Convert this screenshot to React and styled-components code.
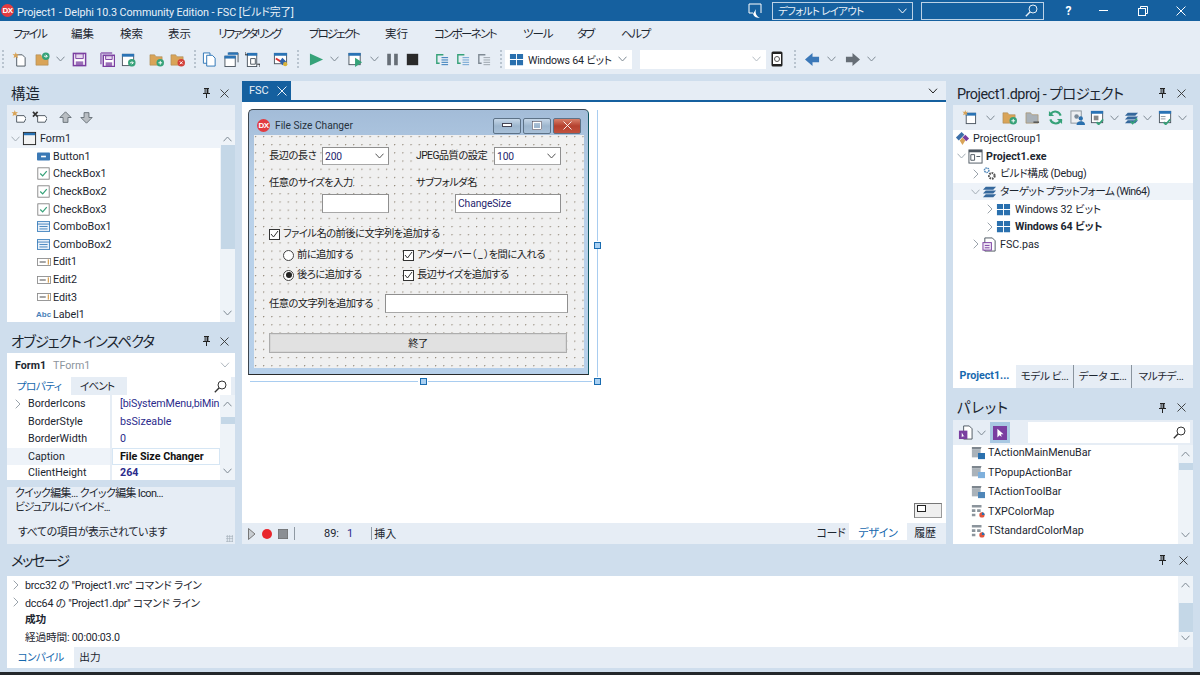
import React from "react";
import styled, { createGlobalStyle } from "styled-components";

const BAND = "#cfdeed";
const PANE = "#e6edf5";
const BLUE = "#15609f";
const LINK = "#1668ae";
const FONT = `Roboto, "Noto Sans CJK JP", sans-serif`;

const GlobalStyle = createGlobalStyle`
  html, body { margin: 0; padding: 0; background: ${BAND}; }
  body {
    font-family: ${FONT};
    font-size: 10.7px;
    color: #1c2630;
    font-feature-settings: "palt";
  }
  * { box-sizing: border-box; }
`;

const Screen = styled.div`
  width: 1200px;
  height: 675px;
  overflow: hidden;
  display: flex;
  flex-direction: column;
  background: ${BAND};
`;

/* ---------- top chrome ---------- */
const TitleBar = styled.header`
  height: 21px;
  flex: none;
  display: flex;
  align-items: center;
  background: ${BLUE};
  color: #e9f1f8;
  font-size: 10.8px;
  padding-left: 1px;
`;
const Logo = styled.span`
  width: ${(p) => p.$size || 13}px;
  height: ${(p) => p.$size || 13}px;
  border-radius: 50%;
  background: #e23b40;
  color: #fff;
  font: bold 8px/1 "Liberation Sans", sans-serif;
  letter-spacing: -0.5px;
  display: flex;
  align-items: center;
  justify-content: center;
  flex: none;
`;
const AppTitle = styled.span`
  margin-left: 3px;
  white-space: nowrap;
  width: 731px;
  letter-spacing: -0.1px;
`;
const DarkCombo = styled.div`
  height: 18px;
  width: ${(p) => p.$w}px;
  margin-left: ${(p) => p.$ml}px;
  border: 1px solid #bcd2e6;
  display: flex;
  align-items: center;
  justify-content: space-between;
  padding: 0 5px;
  font-size: 10.5px;
  letter-spacing: -0.7px;
  color: #e9f1f8;
`;
const WinBtn = styled.span`
  width: ${(p) => p.$w}px;
  margin-left: ${(p) => p.$ml || 0}px;
  display: flex;
  justify-content: center;
  font-size: 12px;
  font-weight: 700;
  color: #fff;
  flex: none;
`;
const MenuBar = styled.nav`
  height: 23px;
  flex: none;
  display: flex;
  align-items: center;
  gap: 26px;
  padding-left: 13px;
  background: ${PANE};
  font-size: 11.5px;
`;
const MenuItem = styled.span`
  width: ${(p) => p.$w}px;
  letter-spacing: ${(p) => p.$track}px;
  white-space: nowrap;
  flex: none;
`;
const ToolBar = styled.div`
  height: 30px;
  flex: none;
  display: flex;
  align-items: center;
  background: ${PANE};
`;
const Slot = styled.span`
  margin-left: ${(p) => p.$ml || 0}px;
  display: flex;
  flex: none;
`;
const Grip = styled.span`
  margin-left: ${(p) => p.$ml || 0}px;
  width: 2px;
  height: 19px;
  flex: none;
  background: repeating-linear-gradient(#b9c4cf 0 2px, transparent 2px 4px);
`;
const ToolCombo = styled.div`
  width: ${(p) => p.$w}px;
  margin-left: ${(p) => p.$ml}px;
  height: 19px;
  flex: none;
  display: flex;
  align-items: center;
  gap: 4px;
  padding: 0 4px;
  background: #fff;
  font-size: 10.6px;
  letter-spacing: -0.2px;
  white-space: nowrap;
  & > svg:last-child { margin-left: auto; margin-right: 1px; }
`;

/* ---------- docking layout ---------- */
const Workspace = styled.main`
  flex: 1;
  min-height: 0;
  display: flex;
  flex-direction: column;
  padding: 7px 7px 4px;
`;
const TopRow = styled.div`
  height: 463px;
  flex: none;
  display: grid;
  grid-template-columns: 228px 704px 240px;
  gap: 7px;
`;
const Stack = styled.div`
  display: flex;
  flex-direction: column;
  min-height: 0;
`;
const PanelHead = styled.div`
  height: ${(p) => p.$h || 24}px;
  flex: none;
  display: flex;
  align-items: center;
  padding: 0 ${(p) => p.$pr || 6}px 0 ${(p) => p.$pl || 4}px;
  font-size: 14.4px;
  color: #1c2630;
  margin-top: ${(p) => p.$mt || 0}px;
`;
const HeadTitle = styled.span`
  flex: 1;
  white-space: nowrap;
  letter-spacing: ${(p) => p.$track || 0}px;
  margin-top: -2px;
`;
const HeadIcons = styled.span`
  display: flex;
  align-items: center;
  gap: ${(p) => p.$gap || 10}px;
  padding-right: ${(p) => p.$pr || 0}px;
`;
const PaneBar = styled.div`
  height: ${(p) => p.$h || 25}px;
  flex: none;
  display: flex;
  align-items: center;
  background: ${PANE};
`;
const TreeBox = styled.div`
  height: ${(p) => p.$h}px;
  flex: none;
  display: flex;
  background: #fff;
  overflow: hidden;
`;
const TreeRows = styled.div`
  flex: 1;
  min-width: 0;
  margin-top: ${(p) => p.$mt || 0}px;
`;
const TreeRow = styled.div`
  height: ${(p) => p.$h || 17.6}px;
  display: flex;
  align-items: center;
  padding-left: ${(p) => p.$indent}px;
  background: ${(p) => (p.$active ? "#eef3f9" : "transparent")};
  font-weight: ${(p) => (p.$bold ? 700 : 400)};
  white-space: nowrap;
`;
const TreeText = styled.span`
  letter-spacing: ${(p) => p.$track || 0}px;
  margin-bottom: 2px;
`;
const ChevronCell = styled.span`
  width: ${(p) => p.$w || 13}px;
  flex: none;
  display: flex;
  justify-content: center;
`;
const IconCell = styled.span`
  width: ${(p) => p.$w || 15}px;
  margin-right: ${(p) => p.$mr || 3}px;
  flex: none;
  display: flex;
  justify-content: center;
`;
const ScrollTrack = styled.div`
  width: 15px;
  flex: none;
  background: #eef3f8;
  display: flex;
  flex-direction: column;
  align-items: center;
  justify-content: space-between;
  padding: 6px 0;
  position: relative;
`;
const ScrollThumb = styled.span`
  position: absolute;
  left: 1px;
  right: 0;
  top: ${(p) => p.$top}px;
  height: ${(p) => p.$h}px;
  background: #c4d7e7;
`;
const TabStrip = styled.div`
  height: ${(p) => p.$h || 18}px;
  flex: none;
  display: flex;
  align-items: stretch;
  background: ${PANE};
`;
const Tab = styled.span`
  width: ${(p) => p.$w}px;
  margin-left: ${(p) => p.$ml || 0}px;
  padding-bottom: 2px;
  display: flex;
  align-items: center;
  justify-content: center;
  white-space: nowrap;
  flex: none;
  letter-spacing: ${(p) => p.$track || 0}px;
  background: ${(p) => (p.$on ? "#fff" : "transparent")};
  color: ${(p) => (p.$on ? LINK : "#1c2630")};
  font-weight: ${(p) => (p.$strong ? 700 : 400)};
  border-right: ${(p) => (p.$rule ? "1px solid #8a949e" : "none")};
`;

/* ---------- inspector ---------- */
const SelectorRow = styled.div`
  height: 24px;
  flex: none;
  background: #fff;
  display: flex;
  align-items: center;
  padding: 0 5px 0 8px;
  gap: 7px;
  font-weight: 700;
  & > svg { margin-left: auto; }
`;
const Muted = styled.span`
  font-weight: 400;
  color: #8b949c;
`;
const SearchBox = styled.span`
  width: ${(p) => p.$w}px;
  margin-left: ${(p) => p.$ml}px;
  height: ${(p) => p.$h || "auto"};
  background: #fff;
  display: flex;
  align-items: center;
  justify-content: flex-end;
  padding-right: 4px;
  flex: none;
`;
const PropGrid = styled.div`
  height: 85px;
  flex: none;
  display: flex;
  background: #fff;
  margin-bottom: 7px;
  overflow: hidden;
`;
const PropRow = styled.div`
  height: 17.6px;
  display: grid;
  grid-template-columns: 21px 82px 2px 1fr;
  align-items: center;
  background: ${(p) => (p.$active ? "#eef3f9" : "transparent")};
  white-space: nowrap;
  &:last-child { height: 14.6px; }
`;
const PropDivider = styled.span`
  height: 100%;
  background: ${PANE};
`;
const PropValue = styled.span`
  height: 100%;
  display: flex;
  align-items: center;
  padding-left: 8px;
  letter-spacing: ${(p) => p.$track || 0}px;
  color: ${(p) => (p.$active ? "#111" : "#2c2c8c")};
  font-weight: ${(p) => (p.$bold ? 700 : 400)};
  background: ${(p) => (p.$active ? "#fff" : "transparent")};
  box-shadow: ${(p) => (p.$active ? "inset 0 0 0 1px #d6e6f4" : "none")};
`;
const QuickPane = styled.div`
  flex: 1;
  background: ${PANE};
  padding: 0 8px;
  font-size: 10.9px;
  line-height: 14px;
  position: relative;
  white-space: nowrap;
`;
const QuickLink = styled.div`
  margin-top: ${(p) => p.$mt}px;
  padding-left: ${(p) => p.$pl || 0}px;
  letter-spacing: ${(p) => p.$track}px;
`;
const ResizeGrip = styled.span`
  position: absolute;
  right: 2px;
  bottom: 2px;
  width: 7px;
  height: 7px;
  background: radial-gradient(circle, #a7b2bc 0.8px, transparent 1px) 0 0 / 2.5px 2.5px;
`;

/* ---------- designer ---------- */
const DocTabs = styled.div`
  height: 21px;
  flex: none;
  display: flex;
  align-items: stretch;
  justify-content: space-between;
  background: ${PANE};
  border-bottom: 2px solid ${BLUE};
`;
const DocTab = styled.span`
  width: 49px;
  background: ${BLUE};
  color: #e9f1f8;
  display: flex;
  align-items: center;
  justify-content: space-between;
  padding: 0 4px 0 7px;
  font-size: 11px;
`;
const Canvas = styled.div`
  height: 421px;
  flex: none;
  background: #fff;
  padding: 7px 6px;
  position: relative;
`;
const Selection = styled.div`
  width: 341px;
  position: relative;
`;
const SelLine = styled.span`
  position: absolute;
  background: #a9cdf0;
  ${(p) => (p.$v ? "width: 1px;" : "height: 1px;")}
  ${(p) => p.$at}
`;
const Handle = styled.span`
  position: absolute;
  width: 7px;
  height: 7px;
  background: #a9d0f2;
  border: 1px solid #1a6cb0;
  ${(p) => p.$at}
`;
const MiniMap = styled.span`
  position: absolute;
  left: 672px;
  top: 401px;
  width: 28px;
  height: 15px;
  background: #efefef;
  border: 1px solid;
  border-color: #777 #9a9a9a #9a9a9a #777;
  &::after {
    content: "";
    position: absolute;
    left: 2px;
    top: 1px;
    width: 7px;
    height: 5px;
    background: #fff;
    border: 1px solid #222;
  }
`;
const FormWindow = styled.div`
  height: 266px;
  border: 1px solid #3c4650;
  border-right-color: #0f5560;
  border-bottom-color: #2a2a2a;
  border-radius: 5px 5px 0 0;
  background: linear-gradient(#a3bcd8, #bad2ea 30%, #b7d0ea);
  padding: 0 4px 6px 5px;
  display: flex;
  flex-direction: column;
`;
const FormTitle = styled.div`
  height: 25px;
  flex: none;
  display: flex;
  align-items: center;
  padding: 6px 3px 0 3px;
  font-size: 10.2px;
  color: #26323c;
`;
const FormCaption = styled.span`
  flex: 1;
  margin-left: 5px;
`;
const CapBtn = styled.span`
  width: 28px;
  height: 16px;
  margin-left: 2px;
  border: 1px solid #5d7287;
  border-radius: 2px;
  background: ${(p) =>
    p.$close
      ? "linear-gradient(#d8806a, #b5412f 50%, #c1513d)"
      : "linear-gradient(#c6d7e8, #9db6ce 50%, #a8c0d8)"};
  display: flex;
  align-items: center;
  justify-content: center;
`;
const FormBody = styled.div`
  flex: 1;
  background-color: #f0f0f0;
  background-image: radial-gradient(circle at 1.5px 1.5px, #8e8474 0.55px, transparent 0.9px);
  background-size: 8.2px 8.2px;
  font-size: 10.3px;
  letter-spacing: -0.55px;
  color: #1c1c1c;
  overflow: hidden;
`;
const FormRow = styled.div`
  height: ${(p) => p.$h}px;
  margin-top: ${(p) => p.$mt}px;
  display: flex;
  align-items: center;
`;
const FormLabel = styled.span`
  margin-left: ${(p) => p.$ml || 0}px;
  width: ${(p) => p.$w}px;
  background: #f0f0f0;
  line-height: 14px;
  white-space: nowrap;
  flex: none;
`;
const Edit = styled.div`
  width: ${(p) => p.$w}px;
  height: ${(p) => p.$h || 19}px;
  margin-left: ${(p) => p.$ml || 0}px;
  flex: none;
  background: #fff;
  border: 1px solid #8f8f8f;
  border-bottom-color: #a8a8a8;
  display: flex;
  align-items: center;
  justify-content: space-between;
  padding: 0 4px 0 2px;
  color: #26266e;
  letter-spacing: -0.1px;
`;
const CheckField = styled.span`
  margin-left: ${(p) => p.$ml || 0}px;
  width: ${(p) => p.$w}px;
  height: 14px;
  flex: none;
  display: flex;
  align-items: center;
  gap: 3px;
  background: #f0f0f0;
  white-space: nowrap;
  line-height: 14px;
`;
const CheckMark = styled.span`
  width: 11px;
  height: 11px;
  flex: none;
  background: #fff;
  border: 1px solid #333;
  display: flex;
  align-items: center;
  justify-content: center;
`;
const Radio = styled.span`
  width: 11px;
  height: 11px;
  flex: none;
  border-radius: 50%;
  background: #fff;
  border: 1px solid #444;
  display: flex;
  align-items: center;
  justify-content: center;
  &::after {
    content: "";
    width: 6px;
    height: 6px;
    border-radius: 50%;
    background: ${(p) => (p.$on ? "#222" : "transparent")};
  }
`;
const FormButton = styled.div`
  width: 298px;
  height: 20px;
  margin-left: 15px;
  padding-bottom: 2px;
  background: #e1e1e1;
  border: 1px solid #adadad;
  box-shadow: inset 0 0 0 1px #d6d6d6;
  display: flex;
  align-items: center;
  justify-content: center;
`;
const StatusBar = styled.div`
  height: 21px;
  flex: none;
  display: flex;
  align-items: center;
  background: ${PANE};
  font-size: 11px;
  padding-right: 3px;
`;
const StatusRule = styled.span`
  width: 1px;
  height: 13px;
  margin-left: ${(p) => p.$ml}px;
  background: #8f99a3;
  flex: none;
`;
const StatusText = styled.span`
  margin-left: ${(p) => p.$ml}px;
  margin-bottom: ${(p) => p.$lift || 0}px;
  flex: none;
  color: ${(p) => p.$color || "inherit"};
`;
const ViewTab = styled.span`
  height: 17px;
  align-self: flex-start;
  margin-left: ${(p) => p.$ml || 0};
  width: ${(p) => p.$w}px;
  flex: none;
  display: flex;
  align-items: center;
  justify-content: center;
  letter-spacing: -0.3px;
  background: ${(p) => (p.$on ? "#fff" : "transparent")};
  color: ${(p) => (p.$on ? LINK : "inherit")};
`;

/* ---------- messages ---------- */
const MessagesBox = styled.div`
  height: 71px;
  flex: none;
  display: flex;
  background: #fff;
`;
const MsgRow = styled.div`
  height: 17.6px;
  display: flex;
  align-items: center;
  padding-left: 2px;
  font-weight: ${(p) => (p.$bold ? 700 : 400)};
  white-space: nowrap;
`;
const MsgText = styled.span`
  margin-left: 3px;
  margin-bottom: ${(p) => (p.$pl ? 2 : 0)}px;
  padding-left: ${(p) => p.$pl || 0}px;
  letter-spacing: -0.2px;
`;
const ScreenEdge = styled.div`
  height: 3px;
  flex: none;
  background: #23272b;
`;

/* ---------- icons ---------- */
const Ico = styled.svg.attrs((p) => ({
  width: p.$s || 15,
  height: p.$s || 15,
  viewBox: "0 0 16 16",
  fill: "none",
}))`
  display: block;
  flex: none;
`;
const G = "#36a279";
const P = "#7a3ea0";
const B = "#2a73b5";
const O = "#d9a458";
const D = "#4c5660";

const ChevD = ({ c = "#7f8a94", w = 9 }) => (
  <svg width={w} height="6" viewBox="0 0 9 6" fill="none" style={{ display: "block", flex: "none" }}>
    <path d="M.5.7 4.5 5 8.5.7" stroke={c} />
  </svg>
);
const ChevR = ({ c = "#9aa3ab" }) => (
  <svg width="6" height="10" viewBox="0 0 6 10" fill="none" style={{ display: "block", flex: "none" }}>
    <path d="M.7.7 5 5 .7 9.3" stroke={c} />
  </svg>
);
const ChevU = ({ c = "#7f8a94" }) => (
  <svg width="9" height="6" viewBox="0 0 9 6" fill="none" style={{ display: "block" }}>
    <path d="M.5 5.3 4.5 1l4 4.3" stroke={c} />
  </svg>
);
const Pin = () => (
  <svg width="7" height="10" viewBox="0 0 7 10" style={{ display: "block" }}>
    <path d="M1 0h5v1H5.4v4H7v1H4v4H3V6H0V5h1.6V1H1zM2.6 1v4h1V1z" fill="#222" />
  </svg>
);
const Close = ({ c = "#333", s = 9 }) => (
  <svg width={s} height={s} viewBox="0 0 9 9" fill="none" style={{ display: "block" }}>
    <path d="m.5.5 8 8m0-8-8 8" stroke={c} strokeWidth=".9" />
  </svg>
);
const Lens = ({ c = "#333" }) => (
  <svg width="13" height="13" viewBox="0 0 13 13" fill="none" style={{ display: "block" }}>
    <circle cx="8" cy="5" r="4" stroke={c} />
    <path d="M5 8 .8 12.2" stroke={c} strokeWidth="1.4" />
  </svg>
);
const Badge = ({ c, x = 12, y = 12, r = 3.6, kind }) => (
  <>
    <circle cx={x} cy={y} r={r} fill={c} />
    {kind === "plus" && <path d={`M${x - 2} ${y}h4M${x} ${y - 2}v4`} stroke="#fff" />}
    {kind === "x" && <path d={`m${x - 1.5} ${y - 1.5} 3 3m0-3-3 3`} stroke="#fff" />}
    {kind === "arrow" && <path d={`M${x - 2} ${y}h3.5m-1.5-1.6 1.6 1.6-1.6 1.6`} stroke="#fff" />}
  </>
);
const Check = ({ x = 8, y = 10 }) => (
  <path d={`m${x} ${y + 2} 2.2 2.4L${x + 7} ${y - 1}`} stroke={G} strokeWidth="1.8" />
);
const Folder = ({ c = O }) => (
  <path d="M1 3h5l1.5 2H14v9H1z" fill={c} stroke="#a88a55" strokeWidth=".6" />
);
const Win = ({ x = 1, y = 2, w = 12, h = 12, fill = "#fff" }) => (
  <>
    <rect x={x + 0.5} y={y + 0.5} width={w} height={h} fill={fill} stroke={D} />
    <rect x={x} y={y} width={w + 1} height="3" fill={B} />
  </>
);

const NewFile = () => (
  <Ico>
    <path d="M5 3h6l3 3v9H5z" fill="#fff" stroke={D} />
    <path d="m4 0 .9 2.4L7.4 2 5.6 4l1 2.4L4 5.2 1.6 6.4l.8-2.4L.6 2l2.6.4z" fill={O} />
  </Ico>
);
const OpenFolder = () => (
  <Ico>
    <Folder />
    <Badge c={G} x={11.5} y={4.5} r={4} kind="arrow" />
  </Ico>
);
const Floppy = ({ shadow }) => (
  <Ico>
    {shadow && <path d="M1 1h12M1 1v12" stroke={P} strokeWidth="2" opacity=".6" />}
    <rect x={shadow ? 3.5 : 1.5} y={shadow ? 3.5 : 1.5} width={shadow ? 12 : 13} height={shadow ? 12 : 13} fill="#fff" stroke={P} strokeWidth="1.6" />
    <path d={shadow ? "M6 4h7v4H6z" : "M4 2h8v5H4z"} fill="#e6d8ef" stroke={P} />
    <path d={shadow ? "M6 11h7v4H6z" : "M4 10h8v5H4z"} fill={P} opacity=".75" />
  </Ico>
);
const WinBadge = () => (
  <Ico>
    <Win />
    <Badge c={G} x={11.5} y={11.5} r={4} kind="arrow" />
  </Ico>
);
const FolderBadge = ({ c, kind }) => (
  <Ico>
    <Folder />
    <Badge c={c} x={12} y={11.5} r={4} kind={kind} />
  </Ico>
);
const DocCopy = () => (
  <Ico>
    <path d="M1.5 1h7v11h-7z" fill="#fff" stroke={B} />
    <path d="M5 3.500h6l3 3V15H5z" fill="#fff" stroke={B} />
  </Ico>
);
const WinStack = () => (
  <Ico>
    <path d="M5 1h10v10" stroke={D} />
    <rect x="4" y="0.500" width="11" height="2.500" fill={B} />
    <Win x={0.5} y={4} w={11} h={11} />
  </Ico>
);
const DocSwap = () => (
  <Ico>
    <Win x={2} y={1} w={10} h={14} />
    <path d="M0 0v3h3M16 16v-3h-3" stroke="#222" />
    <path d="M6 7h5v6H6z" stroke={D} />
  </Ico>
);
const ViewForm = () => (
  <Ico>
    <Win x={1} y={1} w={13} h={11} />
    <path d="M3 7l5 3" stroke="#d33" strokeWidth="2" />
    <path d="m10 6 4 4-4 4-3-4z" fill="#2f62a8" />
    <circle cx="13" cy="13" r="2.300" fill="#d8b23a" />
  </Ico>
);
const Play = () => (
  <Ico>
    <path d="M1 1.500 15 8 1 14.500z" fill={G} />
  </Ico>
);
const WinPlay = () => (
  <Ico>
    <Win x={0.5} y={1} w={12} h={12} />
    <path d="M7.500 6v10L15 11z" fill={G} />
  </Ico>
);
const Pause = () => (
  <Ico $s={13}>
    <path d="M1.500 1h4.500v14H1.500zM10 1h4.500v14H10z" fill="#666e76" />
  </Ico>
);
const Stop = () => (
  <Ico $s={13}>
    <rect x="1" y="1" width="14" height="14" fill="#2a2a2a" />
  </Ico>
);
const Step = ({ c = G, lines = B }) => (
  <Ico>
    <path d="M10 3H3v9h3" stroke={c} strokeWidth="1.500" />
    <path d="M8 6h7M8 8.500h7M8 11h7M8 13.500h7" stroke={lines} />
  </Ico>
);
const Device = () => (
  <Ico $s={16}>
    <rect x="2.500" y=".5" width="11" height="15" rx="1.500" fill="#222" />
    <rect x="4" y="3" width="8" height="10" fill="#fff" />
    <circle cx="8" cy="8" r="2.500" stroke="#555" />
  </Ico>
);
const ArrowL = ({ c }) => (
  <Ico>
    <path d="M0 8 8 1v4h7v6H8v4z" fill={c} />
  </Ico>
);
const ArrowR = ({ c }) => (
  <Ico>
    <path d="M16 8 8 1v4H1v6h7v4z" fill={c} />
  </Ico>
);
const Tag = ({ mark }) => (
  <Ico>
    <path d="M6 6h8l2 3-2 4H6z" fill="#fff" stroke={D} />
    {mark === "new" ? (
      <path d="m4 0 .9 2.400L7.400 2 5.600 4l1 2.400L4 5.200 1.600 6.400l.8-2.400L.6 2l2.600.4z" fill={O} />
    ) : (
      <path d="m1 2 5 5m0-5-5 5" stroke="#333" strokeWidth="1.800" />
    )}
  </Ico>
);
const Up = () => (
  <Ico $s={13}>
    <path d="M8 1 15 8h-4v6H5V8H1z" fill="#b9bec3" stroke="#59626a" />
  </Ico>
);
const Down = () => (
  <Ico $s={13}>
    <path d="M8 15 1 8h4V2h6v6h4z" fill="#b9bec3" stroke="#59626a" />
  </Ico>
);
const FormIco = () => (
  <Ico>
    <rect x="1.500" y="1.500" width="13" height="13" fill="#f3f3f3" stroke="#222" />
    <rect x="2" y="2" width="12" height="2.500" fill={B} />
  </Ico>
);
const ButtonIco = () => (
  <Ico $s={13}>
    <rect y="3" width="16" height="10" rx="1" fill="#3b79b5" />
    <path d="M5 8h6" stroke="#fff" strokeWidth="2" />
  </Ico>
);
const CheckIco = () => (
  <Ico $s={13}>
    <rect x="1" y="1" width="14" height="14" fill="#fff" stroke="#777" />
    <path d="m4 8 3 3 5-6" stroke={G} strokeWidth="1.500" />
  </Ico>
);
const ComboIco = () => (
  <Ico $s={13}>
    <rect x=".5" y="2" width="15" height="12" fill="#eaf2fa" stroke={B} />
    <path d="M.5 5h15M3 8h10M3 11h10" stroke={B} />
  </Ico>
);
const EditIco = () => (
  <Ico $s={14}>
    <rect x=".5" y="4" width="15" height="8" fill="#fff" stroke="#8b8b8b" />
    <path d="M3 8h7" stroke="#999" strokeWidth="2" />
    <path d="M13 5v6" stroke={O} strokeWidth="1.500" />
  </Ico>
);
const AbcIco = styled.span`
  font: bold 8px/1 "Liberation Sans", sans-serif;
  color: #4a80b8;
  width: 15px;
  display: block;
`;
const DiamondGroup = () => (
  <Ico>
    <path d="M7 1 1 7l3 3 6-6z" fill="#3c6fa8" />
    <path d="m11 4 4 4-3 3-4-4z" fill={P} />
    <path d="m5 10 3-3 3 3-3 5z" fill={O} />
  </Ico>
);
const ExeIco = () => (
  <Ico>
    <rect x="1" y="1" width="14" height="14" fill="#fff" stroke={D} />
    <rect x="1" y="1" width="14" height="2.500" fill={D} />
    <path d="M3 6h4v6H3zM9 8h4" stroke={D} />
  </Ico>
);
const Gears = () => (
  <Ico>
    <circle cx="5" cy="4.500" r="2.400" stroke="#4f86b8" strokeWidth="1.600" strokeDasharray="1.500 .7" />
    <circle cx="10.500" cy="10.500" r="3" stroke="#555" strokeWidth="2.200" strokeDasharray="1.800 .9" />
  </Ico>
);
const Layers = ({ check }) => (
  <Ico>
    <path d="M4 3h11l-3 3H1zM4 7h11l-3 3H1zM4 11h11l-3 3H1z" fill="#35689c" />
    {check && <Check x={7} y={10} />}
  </Ico>
);
const WinsLogo = ({ s = 15 }) => (
  <Ico $s={s}>
    <path d="M1 2h6.500v5.500H1zM8.500 2H15v5.500H8.500zM1 8.500h6.500V14H1zM8.500 8.500H15V14H8.500z" fill="#2a70ae" />
  </Ico>
);
const PasIco = () => (
  <Ico>
    <path d="M3 1h8l3 3v11H3z" fill="#fff" stroke={D} />
    <rect x="1" y="6" width="9" height="8" fill="#efe7f4" stroke={P} />
    <path d="M3 9h5M3 11.500h5" stroke={P} />
  </Ico>
);
const AddWin = () => (
  <Ico>
    <Win x={4} y={3} w={10} h={11} />
    <path d="m3.500 0 .8 2 2.200-.4L5 3.300l.9 2.200-2.400-1-2.300 1L2 3.300.4 1.600l2.300.4z" fill={O} />
  </Ico>
);
const FolderGreyMinus = () => (
  <Ico>
    <Folder c="#a9b1b8" />
    <path d="M9 13h6" stroke="#555" strokeWidth="1.600" />
  </Ico>
);
const Refresh = () => (
  <Ico>
    <path d="M13.500 6A6 6 0 0 0 3 4L1.500 6M2.500 10A6 6 0 0 0 13 12l1.500-2" stroke={G} strokeWidth="2.200" />
    <path d="M1 1v5.500h5.500M15 15V9.500H9.500" fill={G} />
  </Ico>
);
const People = () => (
  <Ico>
    <rect x="1" y="1" width="11" height="13" fill="#eceff2" stroke="#8a939b" />
    <circle cx="7" cy="7" r="2.400" fill="#7a8a99" />
    <circle cx="11.500" cy="9" r="2.300" fill="#2a70ae" />
    <path d="M7 16a4.500 4 0 0 1 9 0z" fill="#2a70ae" />
  </Ico>
);
const WinCheck = () => (
  <Ico>
    <Win x={1} y={1} w={12} h={12} />
    <rect x="4" y="6" width="5" height="5" fill="#888" />
    <Check x={7} y={11} />
  </Ico>
);
const DocCheck = () => (
  <Ico>
    <Win x={1} y={1} w={12} h={12} />
    <path d="M3 7h5M3 9.500h5" stroke="#8a939b" />
    <Check x={6} y={11} />
  </Ico>
);
const PalDoc = () => (
  <Ico>
    <path d="M6 1h6l3 3v11H6z" fill="#fff" stroke={D} />
    <rect x="1" y="6" width="9" height="9" fill={P} />
    <path d="M4 8v5l1.500-1.300L7 13z" fill="#fff" />
  </Ico>
);
const CursorSquare = () => (
  <Ico $s={14}>
    <rect width="16" height="16" fill={P} />
    <path d="M5 3v10l2.500-2.400L10 12.500l-.9-3H12z" fill="#fff" />
  </Ico>
);
const ActionIco = ({ tail }) => (
  <Ico $s={14}>
    <path d="m1 1 11 0-1 3H1z" fill="#7d868e" />
    <rect x="1" y="4" width="10" height="9" fill="#aab2b9" />
    <rect x="8" y="8" width="8" height="7" fill={tail} />
  </Ico>
);
const MapIco = () => (
  <Ico $s={14}>
    <path d="M1 1h11v3H1zM1 6h4v3H1zM7 6h4v3H7zM1 11h4v3H1z" fill="#8b949c" />
    <circle cx="12.500" cy="12.500" r="3" fill="#e0553f" />
    <path d="M12.500 9.500a3 3 0 0 1 3 3h-3z" fill="#2a70ae" />
  </Ico>
);

const PanelControls = ({ gap }) => (
  <HeadIcons $gap={gap}>
    <Pin />
    <Close />
  </HeadIcons>
);

const structureItems = [
  [<ButtonIco />, "Button1"],
  [<CheckIco />, "CheckBox1"],
  [<CheckIco />, "CheckBox2"],
  [<CheckIco />, "CheckBox3"],
  [<ComboIco />, "ComboBox1"],
  [<ComboIco />, "ComboBox2"],
  [<EditIco />, "Edit1"],
  [<EditIco />, "Edit2"],
  [<EditIco />, "Edit3"],
  [<AbcIco>Abc</AbcIco>, "Label1"],
];

const properties = [
  { name: "BorderIcons", value: "[biSystemMenu,biMin", open: true, track: -0.15 },
  { name: "BorderStyle", value: "bsSizeable" },
  { name: "BorderWidth", value: "0" },
  { name: "Caption", value: "File Size Changer", active: true, bold: true },
  { name: "ClientHeight", value: "264", bold: true },
];

const palette = [
  [<ActionIco tail="#2a70ae" />, "TActionMainMenuBar"],
  [<ActionIco tail="#7fb0dc" />, "TPopupActionBar"],
  [<ActionIco tail="#4f86b8" />, "TActionToolBar"],
  [<MapIco />, "TXPColorMap"],
  [<MapIco />, "TStandardColorMap"],
];

const StructurePanel = () => (
  <>
    <PanelHead>
      <HeadTitle>構造</HeadTitle>
      <PanelControls />
    </PanelHead>
    <PaneBar>
      <Slot $ml={4}><Tag mark="new" /></Slot>
      <Slot $ml={6}><Tag mark="x" /></Slot>
      <Slot $ml={12}><Up /></Slot>
      <Slot $ml={8}><Down /></Slot>
    </PaneBar>
    <TreeBox $h={192}>
      <TreeRows>
        <TreeRow $indent={2} $active>
          <ChevronCell><ChevD c="#a4adb5" /></ChevronCell>
          <IconCell><FormIco /></IconCell>
          Form1
        </TreeRow>
        {structureItems.map(([icon, label]) => (
          <TreeRow $indent={29} key={label}>
            <IconCell $mr={2}>{icon}</IconCell>
            {label}
          </TreeRow>
        ))}
      </TreeRows>
      <ScrollTrack>
        <ChevU />
        <ScrollThumb $top={15} $h={104} />
        <ChevD />
      </ScrollTrack>
    </TreeBox>
  </>
);

const InspectorPanel = () => (
  <>
    <PanelHead $mt={7}>
      <HeadTitle $track={-1}>オブジェクト インスペクタ</HeadTitle>
      <PanelControls />
    </PanelHead>
    <SelectorRow>
      Form1 <Muted>TForm1</Muted>
      <ChevD c="#b0b8bf" w={10} />
    </SelectorRow>
    <TabStrip>
      <Tab $w={64} $on $track={-0.6}>プロパティ</Tab>
      <Tab $w={52} $track={-0.9}>イベント</Tab>
      <SearchBox $w={104} $ml={4} $h="18px">
        <Lens />
      </SearchBox>
    </TabStrip>
    <PropGrid>
      <TreeRows>
        {properties.map((p) => (
          <PropRow key={p.name} $active={p.active}>
            <ChevronCell $w={21}>{p.open && <ChevR />}</ChevronCell>
            <span>{p.name}</span>
            <PropDivider />
            <PropValue $active={p.active} $bold={p.bold} $track={p.track}>{p.value}</PropValue>
          </PropRow>
        ))}
      </TreeRows>
      <ScrollTrack>
        <ChevU />
        <ScrollThumb $top={22} $h={7} />
        <ChevD />
      </ScrollTrack>
    </PropGrid>
    <QuickPane>
      <QuickLink $mt={0} $track={-0.6}>クイック編集... クイック編集 Icon...</QuickLink>
      <QuickLink $mt={0} $track={-0.9}>ビジュアルにバインド...</QuickLink>
      <QuickLink $mt={11} $pl={3} $track={-0.4}>すべての項目が表示されています</QuickLink>
      <ResizeGrip />
    </QuickPane>
  </>
);

const Option = ({ ml, w, checked, radio, on, children }) => (
  <CheckField $ml={ml} $w={w}>
    {radio ? (
      <Radio $on={on} />
    ) : (
      <CheckMark>
        <svg width="9" height="8" viewBox="0 0 9 8" fill="none">
          {checked && <path d="m1 4 2.500 3L8 1" stroke="#333" />}
        </svg>
      </CheckMark>
    )}
    <span>{children}</span>
  </CheckField>
);

const DesignedForm = () => (
  <FormWindow>
    <FormTitle>
      <Logo>DX</Logo>
      <FormCaption>File Size Changer</FormCaption>
      <CapBtn>
        <svg width="10" height="5"><rect x=".5" y=".5" width="9" height="3" fill="#fff" stroke="#445" /></svg>
      </CapBtn>
      <CapBtn>
        <svg width="10" height="9"><rect x="1" y="1" width="8" height="7" fill="none" stroke="#fff" strokeWidth="2" /><rect x=".5" y=".5" width="9" height="8" fill="none" stroke="#445" strokeWidth=".6" /></svg>
      </CapBtn>
      <CapBtn $close>
        <Close c="#fff" s={9} />
      </CapBtn>
    </FormTitle>
    <FormBody>
      <FormRow $mt={12} $h={18}>
        <FormLabel $ml={15} $w={48}>長辺の長さ</FormLabel>
        <Edit $ml={5} $w={67} $h={18}>200<ChevD c="#555" /></Edit>
        <FormLabel $ml={27} $w={72}>JPEG品質の設定</FormLabel>
        <Edit $ml={6} $w={67} $h={18}>100<ChevD c="#555" /></Edit>
      </FormRow>
      <FormRow $mt={11} $h={14}>
        <FormLabel $ml={15} $w={84}>任意のサイズを入力</FormLabel>
        <FormLabel $ml={63} $w={58}>サブフォルダ名</FormLabel>
      </FormRow>
      <FormRow $mt={4} $h={19}>
        <Edit $ml={68} $w={67} />
        <Edit $ml={66} $w={106}>ChangeSize</Edit>
      </FormRow>
      <FormRow $mt={14} $h={14}>
        <Option ml={15} w={170} checked>ファイル名の前後に文字列を追加する</Option>
      </FormRow>
      <FormRow $mt={7} $h={14}>
        <Option ml={29} w={72} radio>前に追加する</Option>
        <Option ml={48} w={140} checked>アンダーバー（ _ ）を間に入れる</Option>
      </FormRow>
      <FormRow $mt={6} $h={14}>
        <Option ml={29} w={80} radio on>後ろに追加する</Option>
        <Option ml={40} w={108} checked>長辺サイズを追加する</Option>
      </FormRow>
      <FormRow $mt={12} $h={19}>
        <FormLabel $ml={15} $w={108}>任意の文字列を追加する</FormLabel>
        <Edit $ml={8} $w={183} />
      </FormRow>
      <FormRow $mt={20} $h={20}>
        <FormButton>終了</FormButton>
      </FormRow>
    </FormBody>
  </FormWindow>
);

const DesignerPanel = () => (
  <Stack>
    <DocTabs>
      <DocTab>
        FSC
        <Close c="#e9f1f8" s={10} />
      </DocTab>
      <HeadIcons $pr={8}>
        <ChevD c="#222" w={10} />
      </HeadIcons>
    </DocTabs>
    <Canvas>
      <Selection>
        <DesignedForm />
        <SelLine $v $at="left: 349px; top: 1px; height: 131px;" />
        <SelLine $v $at="left: 349px; top: 140px; height: 128px;" />
        <SelLine $at="left: 2px; top: 272px; width: 168px;" />
        <SelLine $at="left: 180px; top: 272px; width: 164px;" />
        <Handle $at="left: 346px; top: 133px;" />
        <Handle $at="left: 172px; top: 269px;" />
        <Handle $at="left: 346px; top: 269px;" />
      </Selection>
      <MiniMap />
    </Canvas>
    <StatusBar>
      <Slot $ml={6}>
        <svg width="8" height="12"><path d="M.5.500 7 6 .5 11.500z" fill="#c8cdd2" stroke="#777" /></svg>
      </Slot>
      <Slot $ml={6}>
        <svg width="10" height="10"><circle cx="5" cy="5" r="5" fill="#e8262d" /></svg>
      </Slot>
      <Slot $ml={6}>
        <svg width="10" height="10"><rect width="10" height="10" fill="#8b8f94" stroke="#666" /></svg>
      </Slot>
      <StatusRule $ml={6} />
      <StatusText $ml={29}>89:</StatusText>
      <StatusText $ml={8} $color="#2c2c8c">1</StatusText>
      <StatusRule $ml={18} />
      <StatusText $ml={2} $lift={2}>挿入</StatusText>
      <ViewTab $ml="auto" $w={36}>コード</ViewTab>
      <ViewTab $w={58} $on>デザイン</ViewTab>
      <ViewTab $w={36}>履歴</ViewTab>
    </StatusBar>
  </Stack>
);

const ProjectPanel = () => (
  <>
    <PanelHead $pl={4} $pr={7}>
      <HeadTitle $track={-0.5}>Project1.dproj - プロジェクト</HeadTitle>
      <PanelControls gap={11} />
    </PanelHead>
    <PaneBar>
      <Slot $ml={9}><AddWin /></Slot>
      <Slot $ml={9}><ChevD /></Slot>
      <Slot $ml={7}><FolderBadge c={G} kind="plus" /></Slot>
      <Slot $ml={8}><FolderGreyMinus /></Slot>
      <Slot $ml={8}><Refresh /></Slot>
      <Slot $ml={7}><People /></Slot>
      <Slot $ml={5}><WinCheck /></Slot>
      <Slot $ml={5}><ChevD /></Slot>
      <Slot $ml={5}><Layers check /></Slot>
      <Slot $ml={4}><ChevD /></Slot>
      <Slot $ml={6}><DocCheck /></Slot>
      <Slot $ml={5}><ChevD /></Slot>
    </PaneBar>
    <TreeBox $h={235}>
      <TreeRows>
        <TreeRow $indent={2}>
          <IconCell $mr={3}><DiamondGroup /></IconCell>
          ProjectGroup1
        </TreeRow>
        <TreeRow $indent={2} $bold>
          <ChevronCell><ChevD c="#a4adb5" /></ChevronCell>
          <IconCell><ExeIco /></IconCell>
          Project1.exe
        </TreeRow>
        <TreeRow $indent={16}>
          <ChevronCell><ChevR /></ChevronCell>
          <IconCell><Gears /></IconCell>
          <TreeText $track={-0.3}>ビルド構成 (Debug)</TreeText>
        </TreeRow>
        <TreeRow $indent={16} $active>
          <ChevronCell><ChevD c="#a4adb5" /></ChevronCell>
          <IconCell><Layers /></IconCell>
          <TreeText $track={-0.6}>ターゲット プラットフォーム (Win64)</TreeText>
        </TreeRow>
        <TreeRow $indent={30}>
          <ChevronCell><ChevR /></ChevronCell>
          <IconCell $mr={4}><WinsLogo /></IconCell>
          <TreeText $track={-0.1}>Windows 32 ビット</TreeText>
        </TreeRow>
        <TreeRow $indent={30} $bold>
          <ChevronCell><ChevR /></ChevronCell>
          <IconCell $mr={4}><WinsLogo /></IconCell>
          <TreeText $track={-0.1}>Windows 64 ビット</TreeText>
        </TreeRow>
        <TreeRow $indent={16}>
          <ChevronCell><ChevR /></ChevronCell>
          <IconCell><PasIco /></IconCell>
          FSC.pas
        </TreeRow>
      </TreeRows>
    </TreeBox>
    <TabStrip $h={23}>
      <Tab $w={63} $on $strong>Project1...</Tab>
      <Tab $w={58} $rule $track={-0.4}>モデル ビ...</Tab>
      <Tab $w={58} $rule $track={-0.4}>データ エ...</Tab>
      <Tab $w={58} $track={-0.4}>マルチデ...</Tab>
    </TabStrip>
  </>
);

const PaletteCursor = styled.span`
  width: 20px;
  height: 21px;
  margin-left: 4px;
  flex: none;
  background: #a9c8e2;
  display: flex;
  align-items: center;
  justify-content: center;
`;

const PalettePanel = () => (
  <>
    <PanelHead $mt={7} $h={25} $pl={4} $pr={7}>
      <HeadTitle $track={0.8}>パレット</HeadTitle>
      <PanelControls gap={11} />
    </PanelHead>
    <PaneBar>
      <Slot $ml={5}><PalDoc /></Slot>
      <Slot $ml={4}><ChevD /></Slot>
      <PaletteCursor><CursorSquare /></PaletteCursor>
      <SearchBox $w={162} $ml={18} $h="21px">
        <Lens />
      </SearchBox>
    </PaneBar>
    <TreeBox $h={99}>
      <TreeRows $mt={-2}>
        {palette.map(([icon, label]) => (
          <TreeRow $indent={17} $h={19.5} key={label}>
            <IconCell $mr={3}>{icon}</IconCell>
            {label}
          </TreeRow>
        ))}
      </TreeRows>
      <ScrollTrack>
        <ChevU />
        <ScrollThumb $top={18} $h={7} />
        <ChevD />
      </ScrollTrack>
    </TreeBox>
  </>
);

const MessagesPanel = () => (
  <>
    <PanelHead $h={32} $pl={4} $pr={5}>
      <HeadTitle $track={-1.6}>メッセージ</HeadTitle>
      <PanelControls gap={13} />
    </PanelHead>
    <MessagesBox>
      <TreeRows>
        <MsgRow>
          <ChevronCell $w={13}><ChevR /></ChevronCell>
          <MsgText>brcc32 の "Project1.vrc" コマンド ライン</MsgText>
        </MsgRow>
        <MsgRow>
          <ChevronCell $w={13}><ChevR /></ChevronCell>
          <MsgText>dcc64 の "Project1.dpr" コマンド ライン</MsgText>
        </MsgRow>
        <MsgRow $bold>
          <MsgText $pl={13}>成功</MsgText>
        </MsgRow>
        <MsgRow>
          <MsgText $pl={13}>経過時間: 00:00:03.0</MsgText>
        </MsgRow>
      </TreeRows>
      <ScrollTrack>
        <ChevU />
        <ScrollThumb $top={27} $h={29} />
        <ChevD />
      </ScrollTrack>
    </MessagesBox>
    <TabStrip $h={21}>
      <Tab $w={67} $on $track={-0.6}>コンパイル</Tab>
      <Tab $w={32}>出力</Tab>
    </TabStrip>
  </>
);

const menus = [
  ["ファイル", 32, -1.7],
  ["編集", 23, 0],
  ["検索", 22, 0],
  ["表示", 24, 0],
  ["リファクタリング", 65, -2],
  ["プロジェクト", 50, -2],
  ["実行", 23, 0],
  ["コンポーネント", 63, -1.7],
  ["ツール", 28, -1],
  ["タブ", 18, -1.8],
  ["ヘルプ", 28, -1.3],
];

export default function App() {
  return (
    <Screen>
      <GlobalStyle />
      <TitleBar>
        <Logo>DX</Logo>
        <AppTitle>Project1 - Delphi 10.3 Community Edition - FSC [ビルド完了]</AppTitle>
        <Slot>
          <svg width="14" height="16" viewBox="0 0 14 16" fill="none">
            <path d="M1 1h12v9" stroke="#fff" />
            <path d="M1 1v9h4" stroke="#fff" />
            <path d="M8 6c-1 4 0 7 4 9-3 0-6-1-7-4" fill="#fff" />
          </svg>
        </Slot>
        <DarkCombo $ml={10} $w={141}>
          デフォルト レイアウト
          <ChevD c="#fff" />
        </DarkCombo>
        <DarkCombo $ml={8} $w={123}>
          <span />
          <Lens c="#e9f1f8" />
        </DarkCombo>
        <WinBtn $w={25} $ml={12}>?</WinBtn>
        <WinBtn $w={40} $ml={2}>
          <svg width="9" height="2"><rect width="9" height="1" fill="#fff" /></svg>
        </WinBtn>
        <WinBtn $w={40}>
          <svg width="10" height="10" fill="none" stroke="#fff"><rect x=".5" y="2.500" width="7" height="7" /><path d="M2.500 2.500v-2h7v7h-2" /></svg>
        </WinBtn>
        <WinBtn $w={36}>
          <Close c="#fff" s={10} />
        </WinBtn>
      </TitleBar>
      <MenuBar>
        {menus.map(([label, width, track]) => (
          <MenuItem key={label} $w={width} $track={track}>{label}</MenuItem>
        ))}
      </MenuBar>
      <ToolBar>
        <Grip $ml={2} />
        <Slot $ml={8}><NewFile /></Slot>
        <Slot $ml={8}><OpenFolder /></Slot>
        <Slot $ml={6}><ChevD /></Slot>
        <Slot $ml={7}><Floppy /></Slot>
        <Slot $ml={13}><Floppy shadow /></Slot>
        <Slot $ml={6}><WinBadge /></Slot>
        <Slot $ml={13}><FolderBadge c={G} kind="plus" /></Slot>
        <Slot $ml={6}><FolderBadge c="#d2403a" kind="x" /></Slot>
        <Grip $ml={9} />
        <Slot $ml={6}><DocCopy /></Slot>
        <Slot $ml={7}><WinStack /></Slot>
        <Slot $ml={6}><DocSwap /></Slot>
        <Slot $ml={13}><ViewForm /></Slot>
        <Grip $ml={9} />
        <Slot $ml={10}><Play /></Slot>
        <Slot $ml={6}><ChevD /></Slot>
        <Slot $ml={9}><WinPlay /></Slot>
        <Slot $ml={7}><ChevD /></Slot>
        <Slot $ml={7}><Pause /></Slot>
        <Slot $ml={7}><Stop /></Slot>
        <Slot $ml={15}><Step /></Slot>
        <Slot $ml={6}><Step lines="#6aa0d0" /></Slot>
        <Slot $ml={6}><Step c="#7f8a94" lines="#9aa3ab" /></Slot>
        <Grip $ml={9} />
        <ToolCombo $ml={3} $w={127}>
          <WinsLogo />
          Windows 64 ビット
          <ChevD />
        </ToolCombo>
        <ToolCombo $ml={8} $w={126}>
          <ChevD c="#b4bcc3" />
        </ToolCombo>
        <Slot $ml={3}><Device /></Slot>
        <Grip $ml={9} />
        <Slot $ml={9}><ArrowL c="#3b78b8" /></Slot>
        <Slot $ml={7}><ChevD /></Slot>
        <Slot $ml={9}><ArrowR c="#666e76" /></Slot>
        <Slot $ml={7}><ChevD /></Slot>
      </ToolBar>
      <Workspace>
        <TopRow>
          <Stack>
            <StructurePanel />
            <InspectorPanel />
          </Stack>
          <DesignerPanel />
          <Stack>
            <ProjectPanel />
            <PalettePanel />
          </Stack>
        </TopRow>
        <MessagesPanel />
      </Workspace>
      <ScreenEdge />
    </Screen>
  );
}
